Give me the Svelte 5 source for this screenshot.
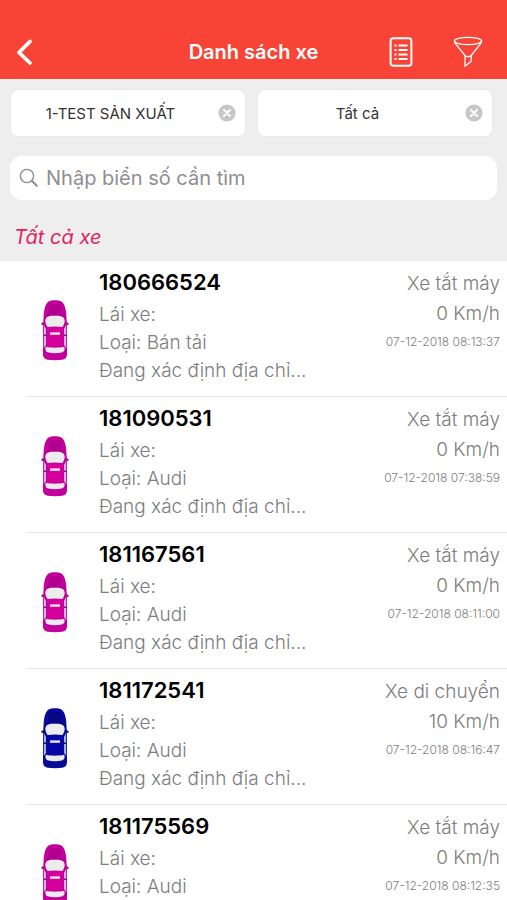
<script lang="ts">
  interface Vehicle {
    plate: string;
    driver: string;
    type: string;
    address: string;
    speed: number;
    time: string;
  }

  const vehicles: Vehicle[] = [
    { plate: '180666524', driver: '', type: 'Bán tải', address: 'Đang xác định địa chỉ...', speed: 0, time: '07-12-2018 08:13:37' },
    { plate: '181090531', driver: '', type: 'Audi', address: 'Đang xác định địa chỉ...', speed: 0, time: '07-12-2018 07:38:59' },
    { plate: '181167561', driver: '', type: 'Audi', address: 'Đang xác định địa chỉ...', speed: 0, time: '07-12-2018 08:11:00' },
    { plate: '181172541', driver: '', type: 'Audi', address: 'Đang xác định địa chỉ...', speed: 10, time: '07-12-2018 08:16:47' },
    { plate: '181175569', driver: '', type: 'Audi', address: 'Đang xác định địa chỉ...', speed: 0, time: '07-12-2018 08:12:35' },
  ];

  let company = $state('1-TEST SẢN XUẤT');
  let status = $state('Tất cả');
  let query = $state('');

  let shown = $derived(vehicles.filter((v) => v.plate.includes(query.trim())));
</script>

{#snippet clearIcon()}
  <svg width="18" height="18" viewBox="0 0 18 18" aria-hidden="true">
    <circle cx="9" cy="9" r="8.6" fill="#c7c7c7" />
    <path d="M6 6l6 6M12 6l-6 6" stroke="#fff" stroke-width="2" stroke-linecap="round" />
  </svg>
{/snippet}

<div class="app">
  <header class="navbar">
    <button class="icon-btn back" type="button" aria-label="Quay lại">
      <svg width="18" height="28" viewBox="0 0 18 28" aria-hidden="true">
        <path d="M14 3.5L3 14.5l11 10.5" fill="none" stroke="#fff" stroke-width="3.8" stroke-linecap="round" stroke-linejoin="round" />
      </svg>
    </button>
    <h1 class="title">Danh sách xe</h1>
    <div class="actions">
      <button class="icon-btn" type="button" aria-label="Danh sách">
        <svg width="24" height="30" viewBox="0 0 24 30" fill="none" stroke="#fff" aria-hidden="true">
          <rect x="1.6" y="1.2" width="20.8" height="27.6" rx="2.8" stroke-width="2" />
          <path d="M9.5 8.5h9M9.5 13h9M9.5 17.5h9M9.5 22h9" stroke-width="2.2" />
          <path d="M5.5 8.5h2M5.5 13h2M5.5 17.5h2M5.5 22h2" stroke-width="2.2" />
        </svg>
      </button>
      <button class="icon-btn" type="button" aria-label="Lọc">
        <svg width="30" height="32" viewBox="0 0 30 32" fill="none" stroke="#fff" stroke-width="1.3" stroke-linejoin="round" aria-hidden="true">
          <ellipse cx="15" cy="5" rx="13.6" ry="3.6" />
          <path d="M1.4 5c0 1.4.6 2.2 1.4 3.2L12 19.5v10.8l6.2-5V19.5l9-11.3c.8-1 1.4-1.8 1.4-3.2" />
          <path d="M12 19.8c1.8.9 4.4.9 6.2 0" />
        </svg>
      </button>
    </div>
  </header>

  <div class="filters">
    <div class="filter">
      <button class="filter-value" type="button">{company}</button>
      <button class="filter-clear" type="button" aria-label="Xóa công ty" onclick={() => (company = '')}>
        {@render clearIcon()}
      </button>
    </div>
    <div class="filter">
      <button class="filter-value" type="button">{status}</button>
      <button class="filter-clear" type="button" aria-label="Xóa trạng thái" onclick={() => (status = '')}>
        {@render clearIcon()}
      </button>
    </div>
  </div>

  <label class="search">
    <svg width="20" height="20" viewBox="0 0 20 20" fill="none" stroke="#8e8e93" aria-hidden="true">
      <circle cx="8" cy="8" r="6.6" stroke-width="1.4" />
      <path d="M12.8 12.8l5 5" stroke-width="2" stroke-linecap="round" />
    </svg>
    <input type="text" placeholder="Nhập biển số cần tìm" aria-label="Nhập biển số cần tìm" bind:value={query} />
  </label>

  <h2 class="section">Tất cả xe</h2>

  <ul class="list">
    {#each shown as v (v.plate)}
      <li class="row">
        <svg class="car" class:moving={v.speed > 0} width="28" height="62" viewBox="0 0 28 62" aria-hidden="true">
          <path class="trim" d="M.5 24l3-1.5v3l-3 .5zM27.5 24l-3-1.5v3l3 .5z" />
          <path class="body" d="M8 2.2C11 .8 17 .8 20 2.2c3 1.6 4.6 6.5 5.2 12L26 27v28c0 3.6-1.6 5.2-4.6 5.7-4.4.6-10.4.6-14.8 0C3.6 60.2 2 58.6 2 55V27l.8-12.8C3.4 8.7 5 3.8 8 2.2z" />
          <path class="hood" d="M9 4.5h10l3 13C17 15.5 11 15.5 6 17.5z" />
          <path class="side" d="M2.8 26l2.2 4v16l-2.2 3zM25.2 26l-2.2 4v16l2.2 3z" />
          <path class="trim" d="M2.5 35.5h3V37h-3zM22.5 35.5h3V37h-3z" />
          <path class="glass" d="M4.3 21.5C5 17 9 16.8 14 16.8s9 .2 9.7 4.7c.1 2.5-1.2 4.6-2.2 6.4-4.6-.7-10.4-.7-15 0-1-1.8-2.3-3.9-2.2-6.4z" />
          <path class="roof" d="M6 29.3c5-.7 11-.7 16 0V47c-5 .8-11 .8-16 0z" />
          <path d="M9 33.3h10v2.6H9z" fill="#fff" opacity=".85" />
          <path class="glass" d="M4.8 47.8c5.5 1.2 12.9 1.2 18.4 0 .9 2.2.3 4.6-1.7 5.5-4.6 1.2-10.4 1.2-15 0-2-.9-2.6-3.3-1.7-5.5z" />
        </svg>
        <div class="info">
          <strong class="plate">{v.plate}</strong>
          <span>Lái xe: {v.driver}</span>
          <span>Loại: {v.type}</span>
          <span>{v.address}</span>
        </div>
        <div class="state">
          <span>{v.speed > 0 ? 'Xe di chuyển' : 'Xe tắt máy'}</span>
          <span>{v.speed} Km/h</span>
          <time>{v.time}</time>
        </div>
      </li>
    {/each}
  </ul>
</div>

<style>
  :global(body) {
    margin: 0;
    background: #fff;
  }

  .app {
    display: flex;
    flex-direction: column;
    height: 100vh;
    overflow: hidden;
    background: #eee;
    font-family: Inter, 'Noto Sans', sans-serif;
    color: #7d7d7d;
  }

  button {
    border: none;
    background: transparent;
    padding: 0;
    font-family: inherit;
    cursor: pointer;
  }

  .navbar {
    display: grid;
    grid-template-columns: 1fr auto 1fr;
    align-items: center;
    flex-shrink: 0;
    padding: 25px 24px 0;
    height: 54px;
    background: #f74436;
  }

  .icon-btn {
    display: flex;
    align-items: center;
    justify-content: center;
  }

  .back {
    justify-self: start;
    margin-left: -8px;
  }

  .title {
    margin: 0;
    font-size: 20px;
    font-weight: 600;
    line-height: 28px;
    color: #fff;
  }

  .actions {
    display: flex;
    justify-content: flex-end;
    align-items: center;
    gap: 40px;
  }

  .filters {
    display: grid;
    grid-template-columns: 1fr 1fr;
    gap: 13px;
    padding: 11px 15px 0 11px;
    flex-shrink: 0;
  }

  .filter {
    display: flex;
    align-items: center;
    gap: 8px;
    height: 46px;
    padding-right: 9px;
    border-radius: 6px;
    background: #fff;
    box-shadow: 0 0 1px rgba(0, 0, 0, 0.2);
  }

  .filter-value {
    flex: 1;
    height: 100%;
    font-size: 15px;
    color: #333;
  }

  .filter-clear {
    display: flex;
  }

  .search {
    display: flex;
    align-items: center;
    gap: 7px;
    flex-shrink: 0;
    height: 44px;
    margin: 20px 10px 0;
    padding: 0 9px;
    border-radius: 12px;
    background: #fff;
  }

  .search input {
    flex: 1;
    min-width: 0;
    padding: 0;
    border: none;
    outline: none;
    background: transparent;
    font-family: inherit;
    font-size: 20px;
    color: #333;
  }

  .search input::placeholder {
    color: #8e8e93;
    opacity: 1;
  }

  .section {
    margin: 0;
    padding: 23px 14px 10px;
    flex-shrink: 0;
    font-size: 20px;
    font-weight: 400;
    font-style: italic;
    line-height: 28px;
    color: #e0245e;
  }

  .list {
    flex: 1;
    min-height: 0;
    margin: 0;
    padding: 0;
    list-style: none;
    overflow-y: auto;
    scrollbar-width: none;
    background: #fff;
  }

  .row {
    display: flex;
    margin-left: 26px;
    padding: 7px 7px 11px 15px;
    border-bottom: 1px solid #e4e4e4;
    font-size: 19px;
    font-weight: 300;
    line-height: 28px;
  }

  .car {
    flex-shrink: 0;
    margin: 31px 30px 0 0;
  }

  .car .body { fill: #c4009c; }
  .car .hood { fill: #b00090; }
  .car .roof { fill: #d4009c; }
  .car .side { fill: #d9b0e6; }
  .car .trim { fill: #7a1590; }
  .car .glass { fill: #ececec; }

  .car.moving .body { fill: #0a0a9a; }
  .car.moving .hood { fill: #060686; }
  .car.moving .roof { fill: #0606a4; }
  .car.moving .side { fill: #a4b4e0; }
  .car.moving .trim { fill: #15155c; }

  .info {
    display: flex;
    flex-direction: column;
    flex: 1;
    min-width: 0;
  }

  .plate {
    margin-bottom: 5px;
    font-size: 22px;
    font-weight: 600;
    color: #000;
  }

  .state {
    display: flex;
    flex-direction: column;
    gap: 2px;
    padding-top: 2px;
    text-align: right;
    white-space: nowrap;
  }

  .state time {
    font-size: 12px;
    line-height: 24px;
  }
</style>
